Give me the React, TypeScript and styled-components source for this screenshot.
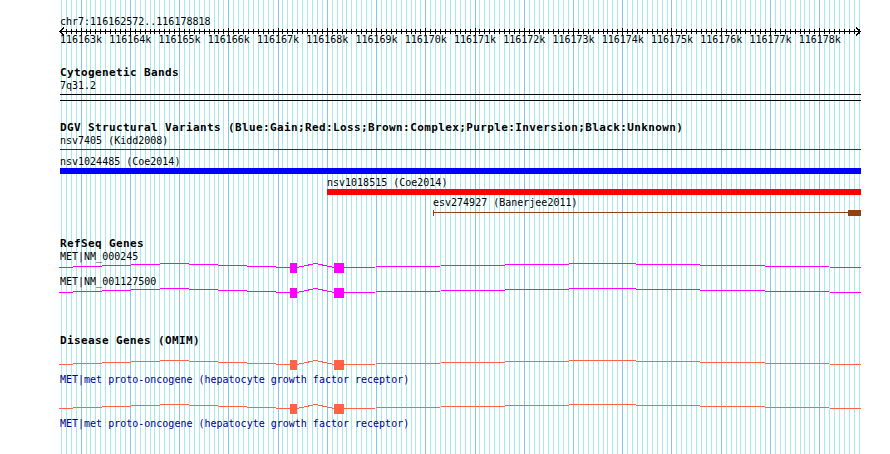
import React from "react";
import styled, { createGlobalStyle } from "styled-components";

// view window
const START = 116162572;
const END = 116178818;
const LEFT = 60;
const SPAN = 800;
const PAGE_W = 890;
const PAGE_H = 454;

const toX = (bp: number) => ((bp - START) * SPAN) / (END - START);
const px = (bp: number) => Math.floor(toX(bp)) + 0.5;

const minorStops: number[] = [];
for (let bp = Math.ceil(START / 100) * 100; bp <= END; bp += 100) minorStops.push(bp);
const majorStops = minorStops.filter(bp => bp % 1000 === 0);

const GlobalStyle = createGlobalStyle`
    html, body {
        margin:0;
        padding:0;
        background:#fff;
    }
    body {
        font-family:"DejaVu Sans Mono","Liberation Mono",monospace;
        color:#000;
    }
`
const Page = styled.div`
    position:relative;
    width:${PAGE_W}px;
    height:${PAGE_H}px;
    overflow:hidden;
    background:#fff;
`
const GridLayer = styled.svg`
    position:absolute;
    left:0;
    top:0;
    pointer-events:none;
`
const Tracks = styled.div`
    position:relative;
    width:${SPAN}px;
    padding:15px 0 0 ${LEFT}px;
`
const Label = styled.div<{ $top?: number; $left?: number; $color?: string }>`
    font-size:10px;
    line-height:13px;
    height:13px;
    white-space:nowrap;
    margin-top:${p => p.$top || 0}px;
    padding-left:${p => p.$left || 0}px;
    color:${p => p.$color || "#000"};
`
const TrackTitle = styled.div<{ $top: number }>`
    font-size:11px;
    font-weight:700;
    letter-spacing:0.38px;
    line-height:12px;
    height:12px;
    white-space:nowrap;
    margin-top:${p => p.$top}px;
`
const Axis = styled.svg`
    display:block;
    overflow:visible;
`
const TickRow = styled.div`
    position:relative;
    height:13px;
`
const TickLabel = styled.span`
    position:absolute;
    top:0;
    font-size:10px;
    line-height:13px;
    white-space:nowrap;
    transform:translateX(-50%);
`
const BandBox = styled.div`
    box-sizing:border-box;
    width:${SPAN + 1}px;
    height:7px;
    margin-top:2px;
    border-top:1px solid #000;
    border-bottom:1px solid #000;
`
const Rule = styled.div<{ $color: string; $top: number }>`
    height:1px;
    width:${SPAN + 1}px;
    margin-top:${p => p.$top}px;
    background:${p => p.$color};
`
const Bar = styled.div<{ $color: string }>`
    height:6px;
    background:${p => p.$color};
`
const Glyph = styled.svg<{ $top?: number }>`
    display:block;
    overflow:visible;
    margin-top:${p => p.$top || 0}px;
`

type Variant = { name: string; start: number; end: number; color: string; kind: "bar" | "line" };

const variants: Variant[] = [
    { name: "nsv1024485 (Coe2014)", start: 0, end: 801, color: "#0000ff", kind: "bar" },
    { name: "nsv1018515 (Coe2014)", start: 267, end: 801, color: "#ff0000", kind: "bar" },
    { name: "esv274927 (Banerjee2011)", start: 373, end: 801, color: "#8b4513", kind: "line" },
];

// exon boxes in pixels from the left edge of the panel
const exons: [number, number][] = [[230, 237], [274, 284]];

const GeneModel = ({ color, top }: { color: string; top?: number }) => {
    const introns: [number, number][] = [[-1, exons[0][0]], [exons[0][1], exons[1][0]], [exons[1][1], SPAN + 1]];
    return (
        <Glyph width={SPAN + 1} height={10} $top={top} shapeRendering="crispEdges">
            {introns.map(([a, b], i) => (
                <polyline
                    key={i}
                    points={`${a},4.5 ${(a + b) / 2},0.5 ${b},4.5`}
                    fill="none"
                    stroke={color}
                    strokeWidth={1}
                />
            ))}
            {exons.map(([a, b], i) => (
                <rect key={i} x={a} y={0} width={b - a} height={10} fill={color} />
            ))}
        </Glyph>
    );
};

const VariantGlyph = ({ v }: { v: Variant }) => {
    if (v.kind === "bar") {
        return <Bar $color={v.color} style={{ marginLeft: v.start, width: v.end - v.start }} />;
    }
    return (
        <Glyph width={SPAN + 1} height={8} shapeRendering="crispEdges">
            <line x1={v.start} y1={3.5} x2={v.end} y2={3.5} stroke={v.color} />
            <rect x={v.start} y={1} width={1} height={6} fill={v.color} />
            <rect x={788} y={1} width={13} height={6} fill={v.color} />
        </Glyph>
    );
};

function App() {
    return (
        <>
            <GlobalStyle />
            <Page>
                <GridLayer width={PAGE_W} height={PAGE_H} shapeRendering="crispEdges">
                    {minorStops.map(bp => (
                        <line key={bp} x1={LEFT + px(bp)} y1={0} x2={LEFT + px(bp)} y2={PAGE_H} stroke="#a6eaee" />
                    ))}
                    {majorStops.map(bp => (
                        <line key={bp} x1={LEFT + px(bp)} y1={0} x2={LEFT + px(bp)} y2={PAGE_H} stroke="#86c6ec" />
                    ))}
                </GridLayer>

                <Tracks>
                    <Label>chr7:116162572..116178818</Label>
                    <Axis width={SPAN} height={5} shapeRendering="crispEdges">
                        <line x1={0} y1={3.5} x2={SPAN} y2={3.5} stroke="#000" />
                        <polyline points="4,-0.5 0,3.5 4,7.5" fill="none" stroke="#000" />
                        <polyline points="796,-0.5 800,3.5 796,7.5" fill="none" stroke="#000" />
                        {minorStops.map(bp => (
                            <line key={bp} x1={px(bp)} y1={1} x2={px(bp)} y2={6} stroke="#000" />
                        ))}
                        {majorStops.map(bp => (
                            <line key={bp} x1={px(bp)} y1={0} x2={px(bp)} y2={7} stroke="#000" />
                        ))}
                    </Axis>
                    <TickRow>
                        {majorStops.map(bp => (
                            <TickLabel key={bp} style={{ left: toX(bp) }}>{bp / 1000}k</TickLabel>
                        ))}
                    </TickRow>

                    <TrackTitle $top={21}>Cytogenetic Bands</TrackTitle>
                    <Label>7q31.2</Label>
                    <BandBox />

                    <TrackTitle $top={21}>DGV Structural Variants (Blue:Gain;Red:Loss;Brown:Complex;Purple:Inversion;Black:Unknown)</TrackTitle>
                    <Label>nsv7405 (Kidd2008)</Label>
                    <Rule $color="#4b1a6a" $top={2} />
                    {variants.map((v, i) => (
                        <React.Fragment key={v.name}>
                            <Label $top={i === 0 ? 5 : i === 1 ? 2 : 1} $left={v.start}>{v.name}</Label>
                            <VariantGlyph v={v} />
                        </React.Fragment>
                    ))}

                    <TrackTitle $top={21}>RefSeq Genes</TrackTitle>
                    <Label>MET|NM_000245</Label>
                    <GeneModel color="#ff00ff" />
                    <Label $top={2}>MET|NM_001127500</Label>
                    <GeneModel color="#ff00ff" />

                    <TrackTitle $top={37}>Disease Genes (OMIM)</TrackTitle>
                    <GeneModel color="#ff6347" top={13} />
                    <Label $top={3} $color="#00008b">MET|met proto-oncogene (hepatocyte growth factor receptor)</Label>
                    <GeneModel color="#ff6347" top={18} />
                    <Label $top={3} $color="#00008b">MET|met proto-oncogene (hepatocyte growth factor receptor)</Label>
                </Tracks>
            </Page>
        </>
    );
}

export default App
